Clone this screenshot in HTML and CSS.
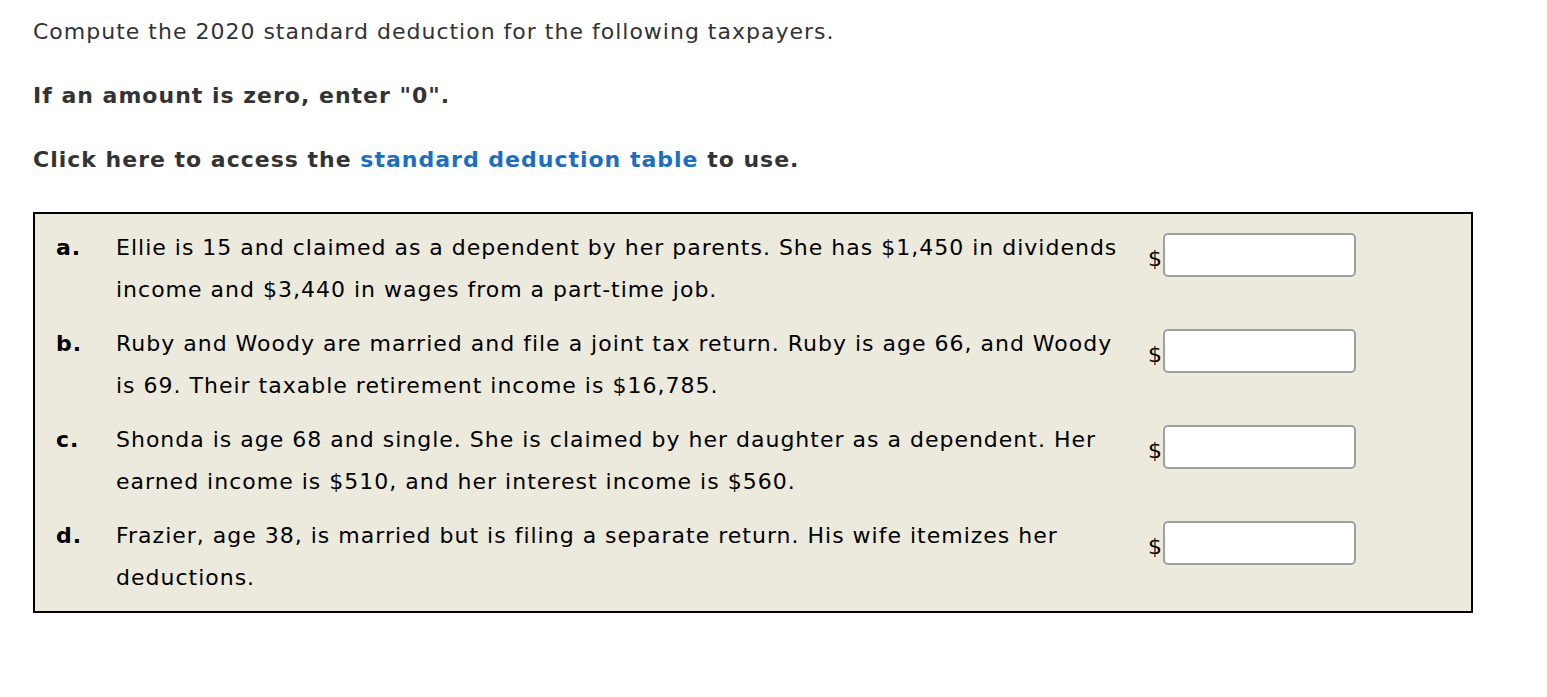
FILE: index.html
```html
<!DOCTYPE html>
<html>
<head>
<meta charset="utf-8">
<link rel="stylesheet" href="styles.css">
</head>
<body>
<div class="page">
  <p class="intro">Compute the 2020 standard deduction for the following taxpayers.</p>
  <p class="intro strong">If an amount is zero, enter "0".</p>
  <p class="intro strong">Click here to access the <a class="link" href="#">standard deduction table</a> to use.</p>
  <div class="box">
    <div class="row">
      <div class="label">a.</div>
      <div class="text">Ellie is 15 and claimed as a dependent by her parents. She has $1,450 in dividends income and $3,440 in wages from a part-time job.</div>
      <div class="answer"><span class="dollar">$</span><input class="field" type="text"></div>
    </div>
    <div class="row">
      <div class="label">b.</div>
      <div class="text">Ruby and Woody are married and file a joint tax return. Ruby is age 66, and Woody is 69. Their taxable retirement income is $16,785.</div>
      <div class="answer"><span class="dollar">$</span><input class="field" type="text"></div>
    </div>
    <div class="row">
      <div class="label">c.</div>
      <div class="text">Shonda is age 68 and single. She is claimed by her daughter as a dependent. Her earned income is $510, and her interest income is $560.</div>
      <div class="answer"><span class="dollar">$</span><input class="field" type="text"></div>
    </div>
    <div class="row">
      <div class="label">d.</div>
      <div class="text">Frazier, age 38, is married but is filing a separate return. His wife itemizes her deductions.</div>
      <div class="answer"><span class="dollar">$</span><input class="field" type="text"></div>
    </div>
  </div>
</div>
</body>
</html>
```
FILE: styles.css
```css
html, body {
  margin: 0;
  padding: 0;
  background: #fff;
}
.page {
  padding: 17px 0 0 33px;
  font-family: "DejaVu Sans", Verdana, sans-serif;
  font-size: 22px;
  letter-spacing: 1px;
  color: #333;
}
.intro {
  margin: 0 0 34px 0;
  line-height: 30px;
}
.strong {
  font-weight: bold;
}
.link {
  color: #1a6ec3;
  text-decoration: none;
}
.box {
  width: 1440px;
  box-sizing: border-box;
  margin-top: 37px;
  border: 2px solid #000;
  background: #eceadc;
  padding: 13px 0 12px 21px;
  color: #000;
}
.row {
  display: grid;
  grid-template-columns: 60px 1022px auto;
  align-items: start;
  margin-bottom: 12px;
}
.row:last-child {
  margin-bottom: 0;
}
.label {
  font-weight: bold;
  line-height: 42px;
}
.text {
  line-height: 42px;
}
.answer {
  display: flex;
  align-items: flex-end;
  padding-top: 6px;
  margin-left: 10px;
}
.dollar {
  line-height: 24px;
  margin-right: 1px;
  padding-bottom: 6px;
  letter-spacing: 0;
}
.field {
  width: 193px;
  height: 44px;
  box-sizing: border-box;
  border: 2px solid #a0a0a0;
  border-radius: 5px;
  background: #fff;
  margin: 0;
  padding: 0 6px;
  font-size: 18px;
}
```
